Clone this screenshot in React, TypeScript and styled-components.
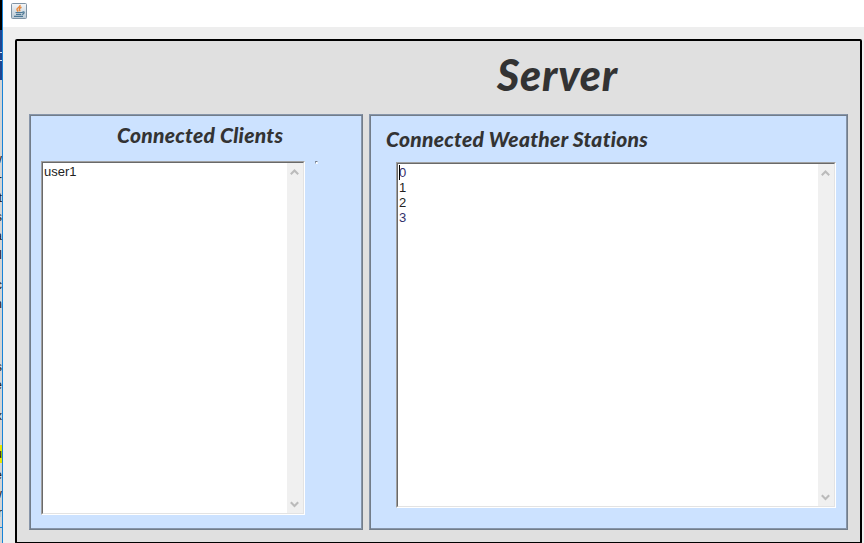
import React from "react";
import styled, { createGlobalStyle } from "styled-components";

const GlobalStyle = createGlobalStyle`
  * { box-sizing: border-box; }
  html, body { margin: 0; padding: 0; overflow: hidden; }
`;

const Screen = styled.div`
  display: flex;
  width: 864px;
  height: 543px;
  overflow: hidden;
  background: #eeeeee;
  font-family: "Liberation Sans", Arial, sans-serif;
`;

const Backdrop = styled.div`
  position: relative;
  flex: none;
  width: 2px;
  height: 543px;
  overflow: hidden;
  background: linear-gradient(#000 0 30px, #1f4590 30px 52px, #dfe5f0 52px 53px, #1f4590 53px 60px, #dfe5f0 60px 61px, #1f4590 61px 80px, #d4d4d4 80px 527px, #1883d7 527px 528px, #d4d4d4 528px);
`;

const Fragment = styled.span<{ $y: number; $marked?: boolean }>`
  position: absolute;
  top: ${(p) => p.$y}px;
  right: 0;
  height: 18px;
  font-size: 13px;
  line-height: 18px;
  color: #222;
  background: ${(p) => (p.$marked ? "#e6e600" : "transparent")};
`;

const Window = styled.div`
  flex: 1;
  display: flex;
  flex-direction: column;
  border-left: 1px solid #1883d7;
`;

const TitleBar = styled.header`
  flex: none;
  height: 27px;
  padding: 3px 0 0 8px;
  background: #fff;
  svg { display: block; }
`;

const Frame = styled.main`
  flex: none;
  width: 847px;
  height: 505px;
  margin: 12px 0 0 12px;
  border: 2px solid #000;
  border-radius: 2px;
  background: #e0e0e0;
`;

const Heading = styled.h1`
  height: 73px;
  margin: 0;
  padding: 6px 0 0 480px;
  font: italic 900 43px/56px Lato, sans-serif;
  letter-spacing: 0.8px;
  color: #333;
`;

const Panels = styled.div`
  display: flex;
  gap: 6px;
  padding-left: 12px;
`;

const Panel = styled.section<{ $w: number; $pad: string }>`
  width: ${(p) => p.$w}px;
  height: 416px;
  padding: ${(p) => p.$pad};
  border: 1px solid #8795a9;
  border-right-color: #727d8a;
  border-bottom-color: #727d8a;
  box-shadow: inset 1px 1px #727d8a, inset -1px -1px #8795a9;
  background: #cce2ff;
`;

const PanelTitle = styled.h2<{ $indent: number; $h: number }>`
  height: ${(p) => p.$h}px;
  margin: 0;
  padding-left: ${(p) => p.$indent}px;
  font: italic 900 21px/28px Lato, sans-serif;
  letter-spacing: 0.28px;
  white-space: nowrap;
  color: #333;
`;

const Row = styled.div<{ $indent?: number }>`
  display: flex;
  align-items: flex-start;
  gap: 10px;
  padding-left: ${(p) => p.$indent ?? 0}px;
`;

const ListBox = styled.div<{ $w: number; $h: number }>`
  display: flex;
  width: ${(p) => p.$w}px;
  height: ${(p) => p.$h}px;
  border: 1px solid;
  border-color: #a0a0a0 #fff #fff #a0a0a0;
  background: #fff;
`;

const ListInner = styled.div`
  display: flex;
  flex: 1;
  justify-content: space-between;
  border: 1px solid;
  border-color: #696969 #e3e3e3 #e3e3e3 #696969;
`;

const Lines = styled.div`
  padding: 1px 0 0 1px;
  font-size: 13px;
  line-height: 15px;
`;

const Line = styled.div<{ $tint?: boolean }>`
  color: ${(p) => (p.$tint ? "#33306c" : "#222")};
`;

const Caret = styled.i`
  position: absolute;
  width: 1px;
  height: 15px;
  background: #000;
`;

const ScrollBar = styled.div`
  display: flex;
  flex-direction: column;
  justify-content: space-between;
  align-items: center;
  width: 16px;
  padding: 6px 1px 5px 0;
  background: #f0f0f0;
  svg { display: block; }
`;

const Speck = styled.div`
  width: 3px;
  height: 3px;
  border: 1px solid;
  border-color: #727d8a #e6f0ff #fff #8795a9;
  background: #fff;
`;

const Chevron = ({ down }: { down?: boolean }) => (
  <svg width="9" height="7" viewBox="0 0 9 7">
    <path d={down ? "M.8 1.2L4.500 4.900L8.200 1.200" : "M.8 5.300L4.500 1.600L8.200 5.300"} fill="none" stroke="#bbbbbb" strokeWidth="2.1" />
  </svg>
);

const JavaIcon = () => (
  <svg width="16" height="16" viewBox="0 0 16 16">
    <defs>
      <linearGradient id="tile" x2="0" y2="1">
        <stop stopColor="#f5f7f9" />
        <stop offset="1" stopColor="#b9c8d4" />
      </linearGradient>
    </defs>
    <rect x=".5" y=".5" width="15" height="15" rx="1" fill="url(#tile)" stroke="#8094a5" />
    <path d="M9 2C9.800 4 5.600 4.800 6 6.500Q6.300 7.500 7.300 8.500M10.500 4.300C7.600 5.500 8.200 6.500 9 8.200" fill="none" stroke="#e8883a" strokeWidth="1.5" />
    <path d="M4.500 9.500H11M5 11.300H10.300M3 13.300H12M11 9.500Q13.500 8 13 10Q12.500 11.300 11 11.300" fill="none" stroke="#4c7895" strokeWidth="1.2" />
  </svg>
);

type ListProps = { w: number; h: number; items: string[]; tinted?: string[]; caret?: boolean };

const List = ({ w, h, items, tinted = [], caret }: ListProps) => (
  <ListBox $w={w} $h={h}>
    <ListInner>
      <Lines>
        {caret && <Caret />}
        {items.map((item) => (
          <Line key={item} $tint={tinted.includes(item)}>{item}</Line>
        ))}
      </Lines>
      <ScrollBar>
        <Chevron />
        <Chevron down />
      </ScrollBar>
    </ListInner>
  </ListBox>
);

// Slivers of the document behind the window, showing past its left edge.
const fragments: [string, number][] = [
  ["w", 150], ["-", 168], ["t", 189], ["s", 208], ["a", 227], ["l", 246], ["c", 276], ["n", 295],
  ["s", 358], ["e", 376], ["x", 407], ["u", 445], ["e", 466], ["w", 485], ["r", 504],
];

export default function App() {
  return (
    <Screen>
      <GlobalStyle />
      <Backdrop>
        {fragments.map(([text, y]) => (
          <Fragment key={y} $y={y} $marked={y === 445}>{text}</Fragment>
        ))}
      </Backdrop>
      <Window>
        <TitleBar><JavaIcon /></TitleBar>
        <Frame>
          <Heading>Server</Heading>
          <Panels>
            <Panel $w={334} $pad="6px 0 0 11px">
              <PanelTitle $indent={76} $h={40}>Connected Clients</PanelTitle>
              <Row>
                <List w={264} h={354} items={["user1"]} />
                <Speck />
              </Row>
            </Panel>
            <Panel $w={479} $pad="10px 0 0 16px">
              <PanelTitle $indent={0} $h={37}>Connected Weather Stations</PanelTitle>
              <Row $indent={10}>
                <List w={440} h={346} items={["0", "1", "2", "3"]} tinted={["0", "3"]} caret />
              </Row>
            </Panel>
          </Panels>
        </Frame>
      </Window>
    </Screen>
  );
}
